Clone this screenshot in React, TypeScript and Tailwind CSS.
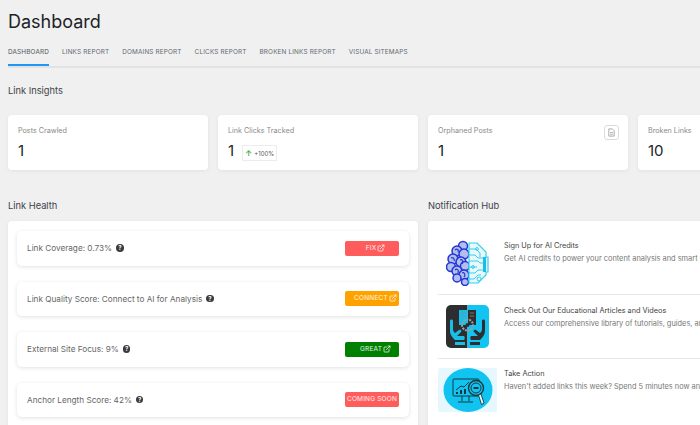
import { ExternalLink } from "lucide-react";

const tabs = ["Dashboard", "Links Report", "Domains Report", "Clicks Report", "Broken Links Report", "Visual Sitemaps"];

const health = [
  { label: "Link Coverage: 0.73%", action: "Fix", color: "bg-[#ff5c5c]", icon: true },
  { label: "Link Quality Score: Connect to AI for Analysis", action: "Connect", color: "bg-[#ffa200]", icon: true },
  { label: "External Site Focus: 9%", action: "Great", color: "bg-[#008000]", icon: true },
  { label: "Anchor Length Score: 42%", action: "Coming Soon", color: "bg-[#ff5c5c]", icon: false },
];

function StatCard({ title, value, children, icon }: { title: string; value: string; children?: React.ReactNode; icon?: boolean }) {
  return (
    <div className="relative h-[55px] w-[200px] shrink-0 rounded-[4px] bg-white px-[10px] pt-[10px] shadow-[0_1px_4px_rgba(0,0,0,0.06)]">
      <p className="text-[7.2px] leading-[11px] text-[#8a8a8a]">{title}</p>
      <div className="mt-[5px] flex items-center gap-[8px]">
        <span className="text-[15px] leading-[20px] text-[#1d2327]">{value}</span>
        {children}
      </div>
      {icon && (
        <span className="absolute right-[9px] top-[10px] flex h-[15px] w-[15px] items-center justify-center rounded-[3px] border border-[#dcdcdc]">
          <svg viewBox="0 0 10 10" className="h-[9px] w-[9px]" fill="none" stroke="#9a9a9a" strokeWidth="0.9">
            <path d="M2 1h4l2 2v6H2z" />
            <path d="M3.5 5h3M3.5 7h3" />
          </svg>
        </span>
      )}
    </div>
  );
}

function HelpDot() {
  return (
    <span className="flex h-[7.5px] w-[7.5px] items-center justify-center rounded-full bg-[#3a3a3e] text-[6px] font-bold leading-none text-white">?</span>
  );
}

function BrainIcon() {
  return (
    <svg viewBox="0 0 44 46" className="h-[46px] w-[44px]">
      <g fill="#b4bdec" stroke="#2136d6" strokeWidth="1.5">
        <circle cx="17" cy="6" r="4.5" />
        <circle cx="11" cy="11" r="5" />
        <circle cx="18" cy="14" r="5" />
        <circle cx="7" cy="19" r="5" />
        <circle cx="15" cy="22" r="5" />
        <circle cx="5" cy="27" r="4.5" />
        <circle cx="19" cy="26" r="4.5" />
        <circle cx="11" cy="31" r="5" />
        <circle cx="18" cy="35" r="5" />
        <circle cx="11" cy="38" r="4" />
        <circle cx="19" cy="42" r="3.5" />
      </g>
      <g fill="none" stroke="#2136d6" strokeWidth="1.2">
        <path d="M9 10c2-2 4 0 3 2M5 18c2-1 4 1 3 3M14 20c2-1 4 1 2 4M9 30c2-2 4 0 3 3M16 33c2-1 4 1 2 4" />
      </g>
      <path d="M23 3h8l9 9v5h2v15h-2v3l-8 8H23z" fill="#e8f9fe" stroke="#35cfee" strokeWidth="1.2" />
      <g fill="none" stroke="#35cfee" strokeWidth="1">
        <path d="M23 9h7l4 4v4M23 15h6l3 3h5M23 21h9l2 2h3M23 27h8M23 33h6l3-3h5M23 39h5l4-4h3" />
        <circle cx="31" cy="9" r="1.4" />
        <circle cx="27" cy="27" r="1.4" />
        <circle cx="33" cy="39" r="2" />
      </g>
      <rect x="37" y="17" width="3" height="15" fill="#17bfe6" />
    </svg>
  );
}

function HandsIcon() {
  return (
    <svg viewBox="0 0 43 43" className="h-[43px] w-[43px]">
      <path d="M21.5 0H5a5 5 0 0 0-5 5v33a5 5 0 0 0 5 5h16.5z" fill="#2e2e30" />
      <path d="M21.5 0H38a5 5 0 0 1 5 5v33a5 5 0 0 1-5 5H21.5z" fill="#12c4f2" />
      <path d="M13 5h8v15h-8z" fill="#17bfe6" />
      <path d="M22 5h8v15h-8z" fill="#2e2e30" />
      <path d="M15 8h4M15 11h4M24 8h4M24 11h4" stroke="#8a8a8e" strokeWidth="0.8" />
      <circle cx="21.5" cy="20" r="5.5" fill="none" stroke="#8fa3ad" strokeWidth="2" strokeDasharray="2 1" />
      <circle cx="21.5" cy="20" r="2" fill="#2e2e30" />
      <path d="M4 16c0-2 3-2 3 0v8c0 2 1 3 2 4l4-3c2-1 3 1 2 2l-4 4h7c1 1 1 3 0 4H9c-2-2-5-5-5-9z" fill="#17bfe6" />
      <path d="M39 16c0-2-3-2-3 0v8c0 2-1 3-2 4l-4-3c-2-1-3 1-2 2l4 4h-7c-1 1-1 3 0 4h9c2-2 5-5 5-9z" fill="#2e2e30" />
      <path d="M9 37h10v3H9z" fill="#17bfe6" />
      <path d="M24 37h10v3H24z" fill="#2e2e30" />
    </svg>
  );
}

function SeoIcon() {
  return (
    <span className="flex h-[44px] w-[59px] shrink-0 items-center justify-center rounded-[2px] bg-[#e6f8fe]">
      <svg viewBox="0 0 50 44" className="h-[44px] w-[50px]">
        <ellipse cx="25" cy="22" rx="24.5" ry="22" fill="#10c3f1" />
        <g fill="none" stroke="#17383f" strokeWidth="1">
          <rect x="10" y="11" width="26" height="17" rx="1" />
          <path d="M19 28v5M26 28v5M15 34h15" />
          <path d="M13 22l5-4 3 1 5-5" />
          <circle cx="33" cy="20" r="7.5" fill="#10c3f1" strokeWidth="1.4" />
          <circle cx="33" cy="20" r="5" />
          <path d="M30.5 20h5" strokeWidth="2" />
        </g>
        <path d="M35.5 27l2.5-1 3 9-2.5 1.5z" fill="#e6f8fe" stroke="#17383f" strokeWidth="0.9" />
        <path d="M13 26v-2h2v2zM17 26v-4h2v4zM21 26v-5h2v5z" fill="#17383f" />
      </svg>
    </span>
  );
}

const notifications = [
  { title: "Sign Up for AI Credits", text: "Get AI credits to power your content analysis and smart linking.", icon: <BrainIcon />, row: "h-[74px] pt-[19px] border-b border-[#e8e8e8]" },
  { title: "Check Out Our Educational Articles and Videos", text: "Access our comprehensive library of tutorials, guides, and videos.", icon: <HandsIcon />, row: "h-[64px] pt-[10px] border-b border-[#e8e8e8]" },
  { title: "Take Action", text: "Haven't added links this week? Spend 5 minutes now and add some.", icon: <SeoIcon />, row: "h-[64px] pt-[9px]" },
];

export default function App() {
  return (
    <div className="h-[425px] w-[700px] overflow-hidden bg-[#f0f0f0] font-['Inter',sans-serif] text-[#3c434a]">
      <div className="w-[1100px] pl-[8px]">
        <h1 className="pt-[9px] text-[18px] leading-[25px] font-normal text-[#1d2327]">Dashboard</h1>

        <nav className="mt-[11px] w-[692px] border-b-2 border-[#e2e2e2]">
          <div className="flex gap-[13px]">
            {tabs.map((tab, i) => (
              <span
                key={tab}
                className={`h-[21px] border-b-2 pt-[2px] text-[6.4px] leading-[10px] tracking-[0.15px] uppercase whitespace-nowrap ${i === 0 ? "border-[#2196f3] text-[#50575e]" : "border-transparent text-[#646970]"}`}
              >
                {tab}
              </span>
            ))}
          </div>
        </nav>

        <h2 className="mt-[16px] text-[9.3px] leading-[14px] font-normal text-[#3c434a]">Link Insights</h2>

        <div className="mt-[17px] flex gap-[10px]">
          <StatCard title="Posts Crawled" value="1" />
          <StatCard title="Link Clicks Tracked" value="1">
            <span className="mt-[4px] flex h-[16px] w-[35px] items-center justify-center gap-[2px] border border-[#ececec] text-[6px] text-[#555]">
              <span className="text-[8px] font-bold leading-none text-[#4caf50]">↑</span>+100%
            </span>
          </StatCard>
          <StatCard title="Orphaned Posts" value="1" icon />
          <StatCard title="Broken Links" value="10" />
        </div>

        <div className="mt-[29px] flex gap-[10px]">
          <section className="w-[410px] shrink-0">
            <h2 className="text-[9.3px] leading-[14px] font-normal">Link Health</h2>
            <div className="mt-[8px] h-[300px] rounded-[4px] bg-white px-[9px] pt-[10px] shadow-[0_1px_4px_rgba(0,0,0,0.06)]">
              <div className="flex flex-col gap-[16px]">
                {health.map((row) => (
                  <div key={row.label} className="flex h-[34.5px] items-center justify-between rounded-[5px] bg-white pr-[10px] pl-[10px] shadow-[0_1px_4px_rgba(0,0,0,0.12)]">
                    <div className="flex items-center gap-[4px] text-[8.2px] text-[#666]">
                      <span>{row.label}</span>
                      <HelpDot />
                    </div>
                    <span className={`flex h-[15px] w-[54px] items-center justify-center gap-[1px] rounded-[2px] pt-[1px] text-[6.5px] tracking-[0.2px] text-white/90 uppercase ${row.color} ${row.icon ? "pl-[7px]" : ""}`}>
                      {row.action}
                      {row.icon && <ExternalLink size={8} strokeWidth={2.4} className="-mt-[2px]" />}
                    </span>
                  </div>
                ))}
              </div>
            </div>
          </section>

          <section className="w-[500px] shrink-0">
            <h2 className="text-[9.3px] leading-[14px] font-normal">Notification Hub</h2>
            <div className="mt-[8px] h-[300px] rounded-[4px] bg-white px-[10px] shadow-[0_1px_4px_rgba(0,0,0,0.06)]">
              {notifications.map((n) => (
                <div key={n.title} className={`flex ${n.row}`}>
                  <div className="flex w-[59px] shrink-0 justify-center">{n.icon}</div>
                  <div className="ml-[7px]">
                    <p className="text-[7.3px] leading-[11px] whitespace-nowrap text-[#444]">{n.title}</p>
                    <p className="mt-[2px] text-[7.4px] leading-[11px] whitespace-nowrap text-[#777]">{n.text}</p>
                  </div>
                </div>
              ))}
            </div>
          </section>
        </div>
      </div>
    </div>
  );
}
